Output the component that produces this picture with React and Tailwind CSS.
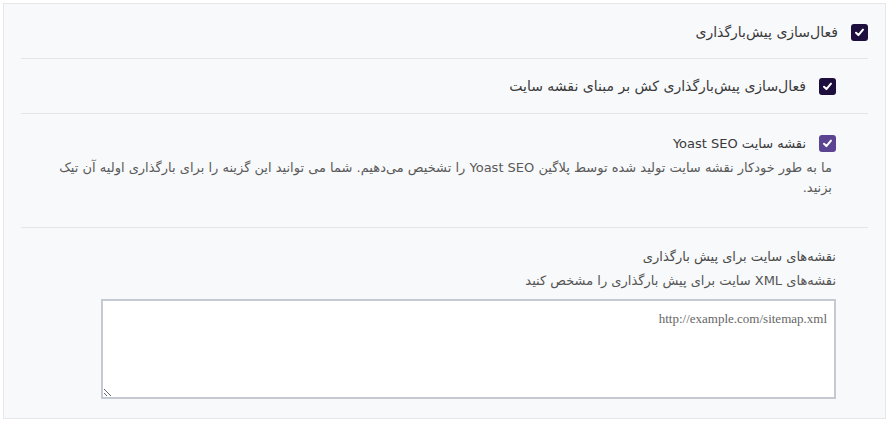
/**
 * تنظیمات پیش‌بارگذاری — پنل نقشه سایت
 */

const FONT = "font-['Tahoma','DejaVu_Sans',sans-serif]";

function Check({ tone = 'dark' }) {
  return (
    <span
      className={`inline-flex h-[17px] w-[17px] shrink-0 items-center justify-center rounded-[3px] ${
        tone === 'dark' ? 'bg-[#1d0e3e]' : 'bg-[#5b4592]'
      }`}
    >
      <svg viewBox="0 0 12 12" className="h-[11px] w-[11px]" fill="none">
        <path d="M2.2 6.3 4.8 8.8 9.8 2.9" stroke="white" strokeWidth="2.2" strokeLinecap="round" strokeLinejoin="round" />
      </svg>
    </span>
  );
}

export default function App() {
  return (
    <div dir="rtl" className={`${FONT} h-[423px] w-[890px] bg-white pt-[3px] pr-[4px] pl-[3px]`}>
      <div className="h-[416px] border border-[#e5e7ea] bg-[#f8f9fb] px-[17px]">
        {/* ردیف ۱ */}
        <div className="flex h-[55px] items-center gap-[13px] border-b border-[#e3e5e8] pt-[2px]">
          <Check />
          <span className="text-[14px] text-[#3a3a3a]">فعال‌سازی پیش‌بارگذاری</span>
        </div>

        {/* ردیف ۲ */}
        <div className="flex h-[55px] items-center gap-[13px] border-b border-[#e3e5e8] pr-[32px]">
          <Check />
          <span className="text-[14px] text-[#3a3a3a]">فعال‌سازی پیش‌بارگذاری کش بر مبنای نقشه سایت</span>
        </div>

        {/* ردیف ۳ */}
        <div className="h-[114px] border-b border-[#e3e5e8] pt-[20px] pr-[32px] pl-[18px]">
          <div className="flex items-center gap-[13px]">
            <Check tone="light" />
            <span className="text-[13px] text-[#3a3a3a]">نقشه سایت Yoast SEO</span>
          </div>
          <p className="mt-[4px] pr-[4px] text-[13px] leading-[20px] text-[#5a5a5a]">
            ما به طور خودکار نقشه سایت تولید شده توسط پلاگین Yoast SEO را تشخیص می‌دهیم. شما می توانید این گزینه را برای بارگذاری اولیه آن تیک بزنید.
          </p>
        </div>

        {/* ردیف ۴ */}
        <div className="pt-[19px] pr-[32px] pl-[80px]">
          <p className="text-[13px] leading-[20px] text-[#4a4a4a]">نقشه‌های سایت برای پیش بارگذاری</p>
          <p className="mt-[4px] text-[13px] leading-[20px] text-[#555]">نقشه‌های XML سایت برای پیش بارگذاری را مشخص کنید</p>
          <textarea
            placeholder="http://example.com/sitemap.xml"
            className="mt-[8px] block h-[100px] w-full resize-y border-2 border-[#c4c9d2] bg-white px-[7px] py-[8px] font-['Liberation_Serif',serif] text-[13px] text-[#555] placeholder:text-[#666] outline-none"
          />
        </div>
      </div>
    </div>
  );
}
